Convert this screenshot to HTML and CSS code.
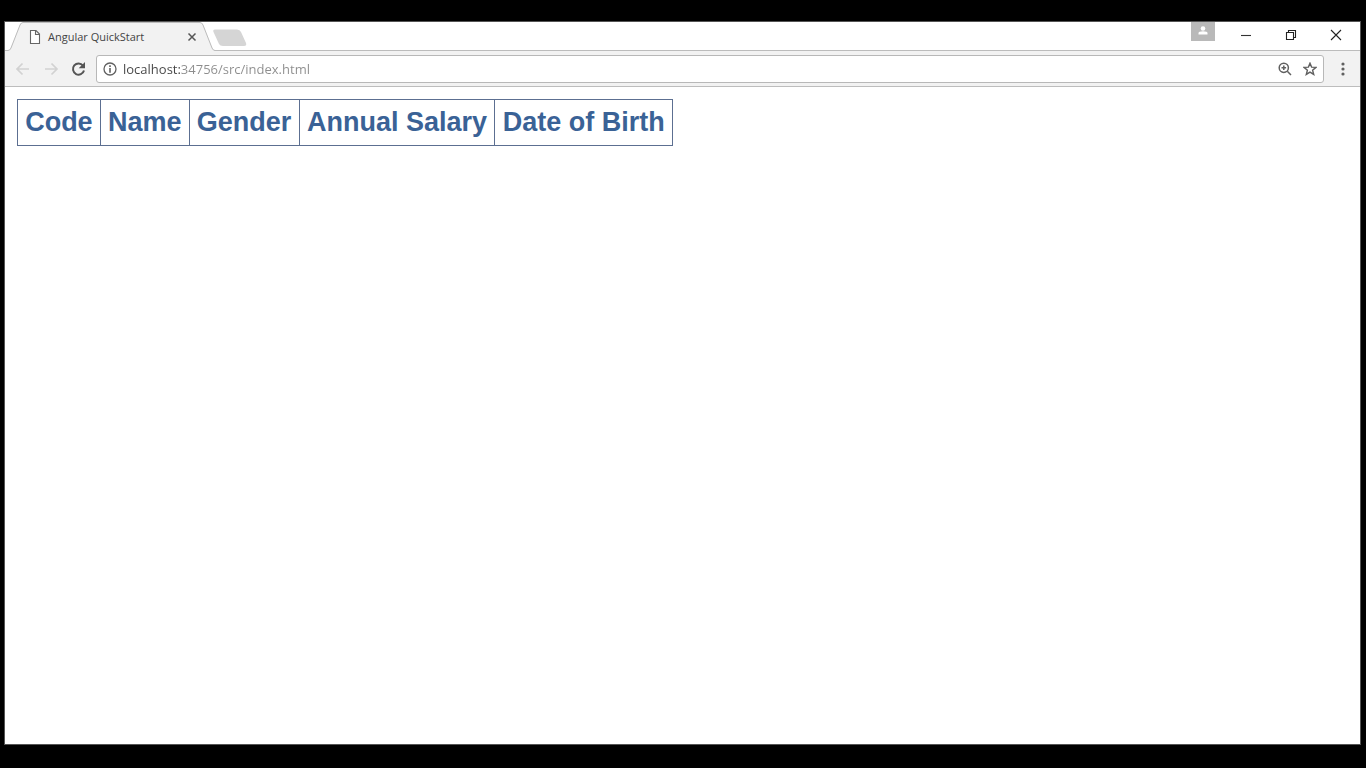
FILE: index.html
```html
<!DOCTYPE html>
<html lang="en">
<head>
<meta charset="utf-8">
<title>Angular QuickStart</title>
<link rel="stylesheet" href="styles.css">
</head>
<body>
<div class="window">
  <header class="tab-strip">
    <div class="tab">
      <svg class="tab-shape" viewBox="0 0 210 29" width="210" height="29" aria-hidden="true">
        <path d="M2 29L5 27L15 3Q16 1 18 1H195Q197 1 198 3L208 27L210 29Z" fill="#f2f2f2"/>
        <path d="M0 28.500H3Q5 28.500 6 26L15 3Q16 .500 18 .500H195Q197 .500 198 3L207 26Q208 28.500 210 28.500" fill="none" stroke="#bcbcbc"/>
      </svg>
      <svg class="page-icon" viewBox="0 0 12 16" width="12" height="16" aria-hidden="true"><path d="M1.5 1.5H7L10.5 5V14.5H1.5ZM6.5 1.5V5.5H10.5" fill="#fff" stroke="#666" stroke-width="1.1"/></svg>
      <span class="tab-title">Angular QuickStart</span>
      <button class="tab-close" aria-label="Close tab"><svg viewBox="0 0 10 10" width="10" height="10"><path d="M1.5 1.5L8.5 8.5M8.5 1.5L1.5 8.5" stroke="#555" stroke-width="1.5"/></svg></button>
    </div>
    <button class="new-tab" aria-label="New tab"><svg viewBox="0 0 36 18" width="36" height="18"><path d="M3 .5H25Q28 .5 29 3L34 14Q35 17 32 17H11Q8 17 7 15L1.500 3Q.500 .500 3 .500Z" fill="#d5d5d5"/></svg></button>
    <div class="window-buttons">
      <button class="profile" aria-label="Profile"><svg viewBox="0 0 24 19" width="24" height="19"><circle cx="12" cy="6.500" r="2.300" fill="#fff"/><path d="M7.500 12.500V11Q7.500 9.300 12 9.300T16.500 11V12.500Z" fill="#fff"/></svg></button>
      <button class="win-button" aria-label="Minimize"><svg viewBox="0 0 12 12" width="12" height="12"><path d="M1 6.500H11" stroke="#333" stroke-width="1.100"/></svg></button>
      <button class="win-button" aria-label="Restore"><svg viewBox="0 0 12 12" width="12" height="12"><path d="M1.500 3.500H8.500V10.500H1.500ZM3.500 3.500V1.500H10.500V8.500H8.500" fill="none" stroke="#222" stroke-width="1.100"/></svg></button>
      <button class="win-button" aria-label="Close window"><svg viewBox="0 0 12 12" width="12" height="12"><path d="M1 1L11 11M11 1L1 11" stroke="#222" stroke-width="1.100"/></svg></button>
    </div>
  </header>
  <nav class="toolbar" aria-label="Browser">
    <button class="tool" aria-label="Back" disabled><svg viewBox="0 0 16 16" width="16" height="16"><path d="M14 8H2.500M7.500 2.500L2 8L7.500 13.500" fill="none" stroke="#d2d2d2" stroke-width="1.700"/></svg></button>
    <button class="tool" aria-label="Forward" disabled><svg viewBox="0 0 16 16" width="16" height="16"><path d="M2 8H13.500M8.500 2.500L14 8L8.500 13.500" fill="none" stroke="#d2d2d2" stroke-width="1.700"/></svg></button>
    <button class="tool" aria-label="Reload"><svg viewBox="0 0 16 16" width="16" height="16"><path d="M12 4.600A5.600 5.600 0 1 0 13 9.500" fill="none" stroke="#555" stroke-width="2"/><path d="M14 1V7.300H7.700Z" fill="#555"/></svg></button>
    <form class="address">
      <svg viewBox="0 0 14 14" width="14" height="14" aria-hidden="true"><circle cx="7" cy="7" r="6" fill="none" stroke="#606060" stroke-width="1.300"/><path d="M7 6V10.700M7 3.200V4.900" stroke="#606060" stroke-width="1.600"/></svg>
      <input class="url" type="text" aria-label="Address" value="localhost:34756/src/index.html">
      <button class="address-action" type="button" aria-label="Zoom"><svg viewBox="0 0 14 14" width="14" height="14"><circle cx="5.800" cy="5.800" r="4.600" fill="none" stroke="#606060" stroke-width="1.500"/><path d="M9.300 9.300L13 13M5.800 3.500V8.100M3.500 5.800H8.100" stroke="#606060" stroke-width="1.500"/></svg></button>
      <button class="address-action" type="button" aria-label="Bookmark"><svg viewBox="0 0 14 14" width="14" height="14"><path d="M7 1.200L8.600 5.100L12.900 5.400L9.600 8.200L10.700 12.400L7 10.100L3.300 12.400L4.400 8.200L1.100 5.400L5.400 5.100Z" fill="none" stroke="#606060" stroke-width="1.400"/></svg></button>
    </form>
    <button class="menu" aria-label="Menu"><svg viewBox="0 0 4 14" width="4" height="14"><g fill="#606060"><circle cx="2" cy="2" r="1.600"/><circle cx="2" cy="7" r="1.600"/><circle cx="2" cy="12" r="1.600"/></g></svg></button>
  </nav>
  <main class="page">
    <table class="employees">
      <thead>
        <tr><th scope="col">Code</th><th scope="col">Name</th><th scope="col">Gender</th><th scope="col">Annual Salary</th><th scope="col">Date of Birth</th></tr>
      </thead>
    </table>
  </main>
</div>
</body>
</html>
```
FILE: styles.css
```css
* { box-sizing: border-box; }
body {
  display: flex;
  min-height: 100vh;
  margin: 0;
  padding: 22px 6px 24px 5px;
  background: #000;
  font-family: "Open Sans", "Noto Sans", sans-serif;
}
button { padding: 0; border: 0; background: none; }
svg { display: block; }
.window {
  flex: 1;
  display: flex;
  flex-direction: column;
  background: #fff;
  box-shadow: 0 0 0 1px #555;
}
.tab-strip {
  display: flex;
  align-items: flex-start;
  height: 29px;
  background: linear-gradient(#bcbcbc, #bcbcbc) bottom / 100% 1px no-repeat;
}
.tab {
  position: relative;
  display: flex;
  align-items: center;
  width: 207px;
  height: 29px;
  padding: 0 9px 0 24px;
}
.tab > * { position: relative; }
.tab > .tab-shape {
  position: absolute;
  top: 0;
  left: 0;
}
.tab-title {
  flex: 1;
  padding-left: 7px;
  color: #444;
  font-size: 11px;
  line-height: 16px;
  white-space: nowrap;
}
.tab-close { margin-right: 6px; }
.new-tab { margin-top: 7px; }
.window-buttons {
  display: flex;
  margin-left: auto;
}
.profile {
  height: 19px;
  margin-right: 8px;
  background: #b9b9b9;
}
.win-button {
  display: grid;
  place-items: center;
  width: 45px;
  height: 26px;
}
.window-buttons .win-button:last-child { margin-right: 2px; }
.toolbar {
  display: flex;
  align-items: center;
  height: 36px;
  padding: 0 15px 0 10px;
  border-bottom: 1px solid #bdbdbd;
  background: #f2f2f2;
}
.tool { margin-right: 12px; }
.tool:nth-of-type(3) { margin-right: 9px; }
.address {
  flex: 1;
  display: flex;
  align-items: center;
  height: 28px;
  padding: 0 6px;
  border: 1px solid #b8b8b8;
  border-radius: 3px;
  background: #fff;
}
.url {
  flex: 1;
  min-width: 0;
  height: 20px;
  padding: 0 0 0 6px;
  border: 0;
  outline: 0;
  background: linear-gradient(90deg, #444 64px, #8d8d8d 64px);
  background-clip: text;
  color: transparent;
  font-family: inherit;
  font-size: 13px;
}
.address-action { margin-left: 11px; }
.menu { margin-left: 17px; }
.page {
  flex: 1;
  padding: 12px;
}
.employees {
  min-width: 656px;
  border-collapse: collapse;
  color: #3a6296;
  font-family: "Liberation Sans", Arial, sans-serif;
  font-size: 27px;
  line-height: 31px;
}
.employees th {
  padding: 7px;
  border: 1px solid #5c6f91;
  font-weight: 700;
  white-space: nowrap;
}
```
